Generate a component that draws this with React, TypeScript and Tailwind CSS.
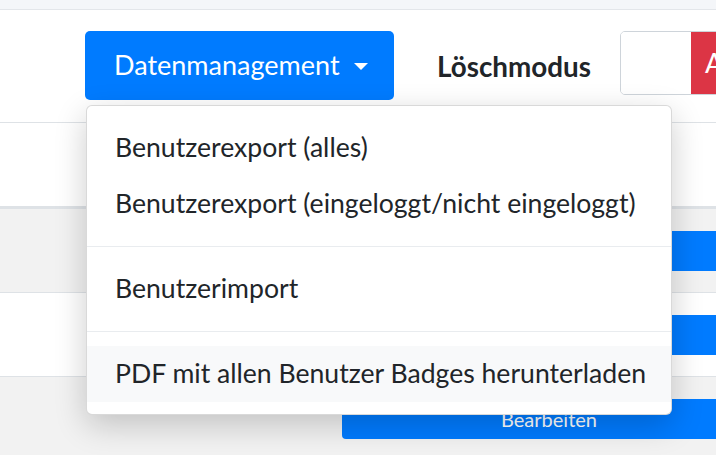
import React from 'react';

const items = [
  'Benutzerexport (alles)',
  'Benutzerexport (eingeloggt/nicht eingeloggt)',
];

function Row({ striped, label }: { striped?: boolean; label: string }) {
  return (
    <div className={`flex h-[84px] items-center border-t border-[#dee2e6] ${striped ? 'bg-[#f2f2f2]' : 'bg-white'}`}>
      <div className="w-[342px] shrink-0" />
      <button className="h-[40px] w-[414px] shrink-0 rounded-[4px] bg-[#007bff] text-[20px] text-white">
        {label}
      </button>
    </div>
  );
}

export default function App() {
  return (
    <div className="relative h-[455px] w-[716px] overflow-hidden bg-[#f4f6f9] font-['Lato',sans-serif] text-[#212529]">
      <div className="h-[9px]" />
      <div className="border-t border-[#e3e6ea] bg-white">
        {/* Kopfzeile */}
        <div className="flex h-[112px] items-start pl-[85px] pt-[21px]">
          <div className="relative">
            <button className="flex h-[69px] w-[309px] items-center rounded-[5px] bg-[#007bff] pl-[29px] text-[27px] text-white">
              Datenmanagement
              <span className="ml-[14px] mt-[2px] h-0 w-0 border-x-[7px] border-t-[7px] border-x-transparent border-t-white" />
            </button>

            {/* Dropdown */}
            <div className="absolute left-[1px] top-[74px] z-10 w-[586px] rounded-[6px] border border-[rgba(0,0,0,0.15)] bg-white pb-[12px] pt-[14px] shadow-[0_10px_32px_rgba(0,0,0,0.2)]">
              {items.map((t) => (
                <div key={t} className="flex h-[56px] items-center whitespace-nowrap pl-[28px] text-[26.6px]">
                  {t}
                </div>
              ))}
              <div className="my-[14px] border-t border-[#e9ecef]" />
              <div className="flex h-[56px] items-center pl-[28px] text-[26.6px]">Benutzerimport</div>
              <div className="my-[14px] border-t border-[#e9ecef]" />
              <div className="flex h-[56px] items-center whitespace-nowrap bg-[#f8f9fa] pl-[28px] text-[26.6px]">
                PDF mit allen Benutzer Badges herunterladen
              </div>
            </div>
          </div>

          <div className="ml-[43px] flex h-[69px] items-center pt-[3px]">
            <span className="text-[27.8px] font-bold">Löschmodus</span>
          </div>

          <div className="ml-[29px] flex h-[64px] w-[160px] shrink-0 overflow-hidden rounded-[5px] border border-[#ced4da]">
            <div className="w-[70px] bg-white" />
            <div className="flex flex-1 items-center bg-[#dc3545] pl-[14px] text-[27px] text-white">AUS</div>
          </div>
        </div>

        {/* Tabelle */}
        <div className="h-[86px] border-b-2 border-t border-[#dee2e6] bg-white" />
        <Row striped label="Bearbeiten" />
        <Row label="Bearbeiten" />
        <Row striped label="Bearbeiten" />
      </div>
    </div>
  );
}
